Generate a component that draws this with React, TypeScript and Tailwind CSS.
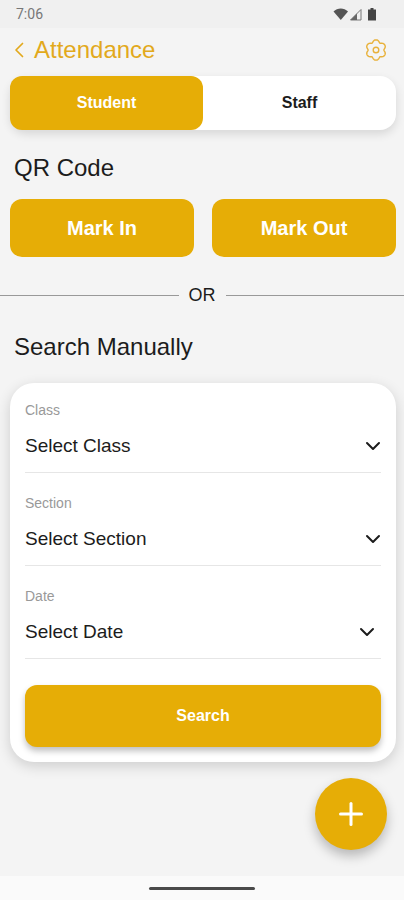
import * as React from 'react';
import { ChevronDown, Plus } from 'lucide-react';

const fields = [
  { id: 'class', label: 'Class', placeholder: 'Select Class', iconClass: '-mr-1' },
  { id: 'section', label: 'Section', placeholder: 'Select Section', iconClass: '-mr-1' },
  { id: 'date', label: 'Date', placeholder: 'Select Date', iconClass: 'mr-0.5' },
];

const tabs = ['Student', 'Staff'];

// Outline of the six-lobed cog
const cogPoints = Array.from({ length: 120 }, (_, i) => {
  const angle = (i / 120) * Math.PI * 2;
  const radius = 9.2 + 1.1 * Math.cos(6 * angle) - 0.2 * Math.cos(12 * angle);
  const x = 12 + radius * Math.sin(angle);
  const y = 12 - radius * Math.cos(angle);
  return `${x.toFixed(2)},${y.toFixed(2)}`;
}).join(' ');

const CogIcon: React.FC = () => (
  <svg className="h-6 w-6" viewBox="0 0 24 24" fill="none" stroke="currentColor" strokeWidth="1.4" strokeLinejoin="round" aria-hidden="true">
    <polygon points={cogPoints} />
    <circle cx="12" cy="12" r="2.8" />
  </svg>
);

const StatusBar: React.FC = () => (
  <div className="flex h-7 items-center justify-between bg-[#f0f0f0] pl-4 pr-6">
    <span className="font-['Roboto',sans-serif] text-sm leading-4 text-[#777777]">7:06</span>
    <svg className="h-4 w-12" viewBox="0 0 48 16" aria-hidden="true">
      <path d="M1.5 5.5C5.5 1.4 12 1.4 16 5.5L8.8 14Z" fill="#555555" />
      <path d="M18.5 14L29 3.5V14Z" fill="none" stroke="#777777" strokeWidth="1" />
      <path d="M18.5 14L25 7.5V14Z" fill="#666666" />
      <path d="M38.5 2H41.5V3.5H44V14.5H36V3.5H38.5Z" fill="#444444" />
    </svg>
  </div>
);

export default function App() {
  const [activeTab, setActiveTab] = React.useState('Student');

  return (
    <div className="flex min-h-screen flex-col bg-[#f4f4f4] font-['Liberation_Sans',Arial,sans-serif] text-[#1c1c1c]">
      <StatusBar />

      {/* Header */}
      <header className="flex h-11 items-center justify-between pl-3.5 pr-4">
        <div className="flex items-center gap-2.5 text-[#e2a91c]">
          <button type="button" aria-label="Back">
            <svg className="h-4 w-2.5" viewBox="0 0 10 16" fill="none" stroke="currentColor" strokeWidth="1.7" strokeLinecap="round" strokeLinejoin="round">
              <path d="M8.5 1.5L2 8L8.5 14.5" />
            </svg>
          </button>
          <h1 className="text-2xl leading-8">Attendance</h1>
        </div>
        <button type="button" aria-label="Settings" className="text-[#e8b13a]">
          <CogIcon />
        </button>
      </header>

      <main className="flex flex-1 flex-col">
        {/* Student / Staff switch */}
        <div
          role="tablist"
          className="ml-2.5 mr-2 mt-1 grid grid-cols-2 rounded-2xl bg-white shadow-[0_4px_10px_rgba(0,0,0,0.12)]"
        >
          {tabs.map((tab) => (
            <button
              key={tab}
              type="button"
              role="tab"
              aria-selected={activeTab === tab}
              onClick={() => setActiveTab(tab)}
              className={
                activeTab === tab
                  ? 'h-[54px] rounded-xl bg-[#e6ad06] text-base font-bold text-white'
                  : 'h-[54px] rounded-xl text-base font-bold text-[#1c1c1c]'
              }
            >
              {tab}
            </button>
          ))}
        </div>

        {/* QR code */}
        <h2 className="mx-3.5 mt-[22px] text-2xl leading-8">QR Code</h2>
        <div className="ml-2.5 mr-2 mt-[15px] grid grid-cols-2 gap-[18px]">
          <button type="button" className="h-[58px] rounded-xl bg-[#e6ad06] text-xl font-bold text-white">
            Mark In
          </button>
          <button type="button" className="h-[58px] rounded-xl bg-[#e6ad06] text-xl font-bold text-white">
            Mark Out
          </button>
        </div>

        <div className="mt-6 flex items-center gap-2.5 text-lg leading-7">
          <div className="h-px flex-1 bg-[#999999]" />
          <span>OR</span>
          <div className="h-px flex-1 bg-[#999999]" />
        </div>

        {/* Manual search */}
        <h2 className="mx-3.5 mt-[22px] text-2xl leading-8">Search Manually</h2>
        <form
          onSubmit={(e) => e.preventDefault()}
          className="ml-2.5 mr-2 mt-5 rounded-3xl bg-white p-[15px] shadow-[0_4px_14px_rgba(0,0,0,0.16)]"
        >
          {fields.map((field) => (
            <div key={field.id} className="mb-[18px] border-b border-[#e6e6e6] pb-2 pt-0.5">
              <label htmlFor={field.id} className="block text-sm leading-5 text-[#999999]">
                {field.label}
              </label>
              <div className="mt-2 grid items-center">
                <select id={field.id} className="col-start-1 row-start-1 h-9 w-full appearance-none bg-transparent text-[19px]">
                  <option>{field.placeholder}</option>
                </select>
                <ChevronDown
                  className={`pointer-events-none col-start-1 row-start-1 h-6 w-6 justify-self-end ${field.iconClass}`}
                  strokeWidth={2}
                />
              </div>
            </div>
          ))}
          <button
            type="submit"
            className="mt-2 h-[62px] w-full rounded-xl bg-[#e6ad06] text-base font-bold text-white shadow-[0_4px_6px_rgba(0,0,0,0.25)]"
          >
            Search
          </button>
        </form>

        <button
          type="button"
          aria-label="Add"
          className="mb-6 mr-[17px] mt-4 flex h-[72px] w-[72px] items-center justify-center self-end rounded-full bg-[#e6ad06] text-white shadow-[0_6px_12px_rgba(0,0,0,0.25)]"
        >
          <Plus className="h-9 w-9" strokeWidth={2} />
        </button>
      </main>

      {/* Gesture bar */}
      <div className="flex h-6 items-center justify-center bg-[#fafafa]">
        <div className="h-[3px] w-[106px] rounded-full bg-[#4a4a4a]" />
      </div>
    </div>
  );
}
